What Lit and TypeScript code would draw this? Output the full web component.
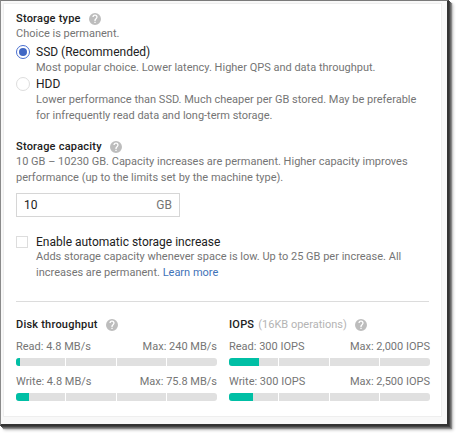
import { LitElement, html, css } from "lit";
import { customElement } from "lit/decorators.js";

const help = html`<svg class="help" viewBox="0 0 24 24"><path fill="#bdbdbd" fill-rule="evenodd" d="M12 0a12 12 0 1 0 0 24a12 12 0 0 0 0-24zm1.300 20h-2.600v-2.600h2.600V20zm2.700-8.800l-1.200 1.200c-1 1-1.500 1.800-1.500 3.600h-2.600v-.6c0-1.500.5-2.800 1.500-3.800l1.600-1.600c.5-.5.8-1.100.8-1.800 0-1.400-1.200-2.600-2.600-2.600S9.400 6.800 9.400 8.200H6.800a5.200 5.200 0 0 1 10.400 0c0 1.200-.5 2.200-1.200 3z"/></svg>`;

const bar = (pct: number) => html`<div class="bar"><div class="fill" style="width:${pct}px"></div><i></i><i></i><i></i></div>`;

@customElement("app-root")
export class AppRoot extends LitElement {
  static styles = css`
    :host { display: block; width: 456px; height: 433px; background: #fff; font-family: Roboto, "Liberation Sans", sans-serif; font-size: 11px; color: #757575; overflow: hidden; }
    * { box-sizing: border-box; }
    .frame { width: 449px; height: 426px; padding: 2px 5px 7px 2px; background: #f8f8f8; border-top: 1px solid #7a7a7a; border-left: 1px solid #8a8a8a; border-right: 2px solid #333; border-bottom: 2px solid #333; box-shadow: 1px 1px 0 #444, 2px 2px 0 #666, 3px 3px 1px #888, 4px 4px 3px #bbb; }
    .card { height: 100%; background: #fff; border: 1px solid #eee; padding: 8px 12px 0 12px; }
    .title { font-size: 11px; letter-spacing: 0.22px; line-height: 14px; font-weight: 500; color: #212121; display: flex; align-items: center; }
    .help { width: 12px; height: 12px; margin-left: 8px; flex: none; }
    .sub { line-height: 16px; }
    .radio-row { display: flex; gap: 6px; align-items: center; height: 16px; font-size: 12px; color: #212121; }
    .radio { width: 14px; height: 14px; border-radius: 50%; border: 1px solid #ddd; flex: none; display: flex; align-items: center; justify-content: center; background: #fff; }
    .radio.on { border-color: #4a6fd0; }
    .radio.on::after { content: ""; width: 8px; height: 8px; border-radius: 50%; background: #3f66c4; }
    .desc { margin-left: 20px; line-height: 16px; }
    .s1 { margin-top: 2px; }
    .s2 { margin-top: 16px; }
    .input { margin-top: 7px; width: 164px; height: 24px; border: 1px solid #d6d6d6; display: flex; justify-content: space-between; align-items: center; padding: 0 7px; font-size: 12px; }
    .input b { font-weight: 400; color: #212121; }
    .check-row { margin-top: 17px; display: flex; gap: 8px; align-items: center; height: 15px; font-size: 12px; color: #212121; }
    .check { width: 12px; height: 12px; border: 1px solid #ddd; flex: none; }
    .desc a { color: #3f73b8; text-decoration: none; }
    hr { border: 0; border-top: 1px solid #dcdcdc; margin: 20px 0 0 0; }
    .cols { display: grid; grid-template-columns: 201px 201px; gap: 12px; margin-top: 15px; }
    .col .title { height: 16px; }
    .muted { font-size: 11px; letter-spacing: 0; font-weight: 400; color: #b4b4b4; margin-left: 4px; }
    .labels { display: flex; justify-content: space-between; line-height: 14px; }
    .mt { margin-top: 7px; }
    .mt2 { margin-top: 9px; }
    .bar { height: 8px; margin-top: 4px; background: #e0e0e0; border-radius: 3px; position: relative; display: grid; grid-template-columns: repeat(4, 1fr); overflow: hidden; }
    .fill { position: absolute; left: 0; top: 0; bottom: 0; background: #00bfa5; }
    .bar i { border-right: 1px solid #fff; }
  `;
  render() {
    return html`<div class="frame"><div class="card">
      <div class="title">Storage type ${help}</div>
      <div class="sub">Choice is permanent.</div>
      <div class="s1">
        <div class="radio-row"><span class="radio on"></span>SSD (Recommended)</div>
        <div class="desc">Most popular choice. Lower latency. Higher QPS and data throughput.</div>
        <div class="radio-row"><span class="radio"></span>HDD</div>
        <div class="desc">Lower performance than SSD. Much cheaper per GB stored. May be preferable<br>for infrequently read data and long-term storage.</div>
      </div>
      <div class="s2">
        <div class="title">Storage capacity ${help}</div>
        <div class="sub">10 GB – 10230 GB. Capacity increases are permanent. Higher capacity improves<br>performance (up to the limits set by the machine type).</div>
        <div class="input"><b>10</b><span>GB</span></div>
      </div>
      <div class="check-row"><span class="check"></span>Enable automatic storage increase</div>
      <div class="desc">Adds storage capacity whenever space is low. Up to 25 GB per increase. All<br>increases are permanent. <a href="#">Learn more</a></div>
      <hr>
      <div class="cols">
        <div class="col">
          <div class="title">Disk throughput ${help}</div>
          <div class="labels mt"><span>Read: 4.8 MB/s</span><span>Max: 240 MB/s</span></div>
          ${bar(4)}
          <div class="labels mt2"><span>Write: 4.8 MB/s</span><span>Max: 75.8 MB/s</span></div>
          ${bar(13)}
        </div>
        <div class="col">
          <div class="title">IOPS <span class="muted">(16KB operations)</span> ${help}</div>
          <div class="labels mt"><span>Read: 300 IOPS</span><span>Max: 2,000 IOPS</span></div>
          ${bar(30)}
          <div class="labels mt2"><span>Write: 300 IOPS</span><span>Max: 2,500 IOPS</span></div>
          ${bar(24)}
        </div>
      </div>
    </div></div>`;
  }
}
